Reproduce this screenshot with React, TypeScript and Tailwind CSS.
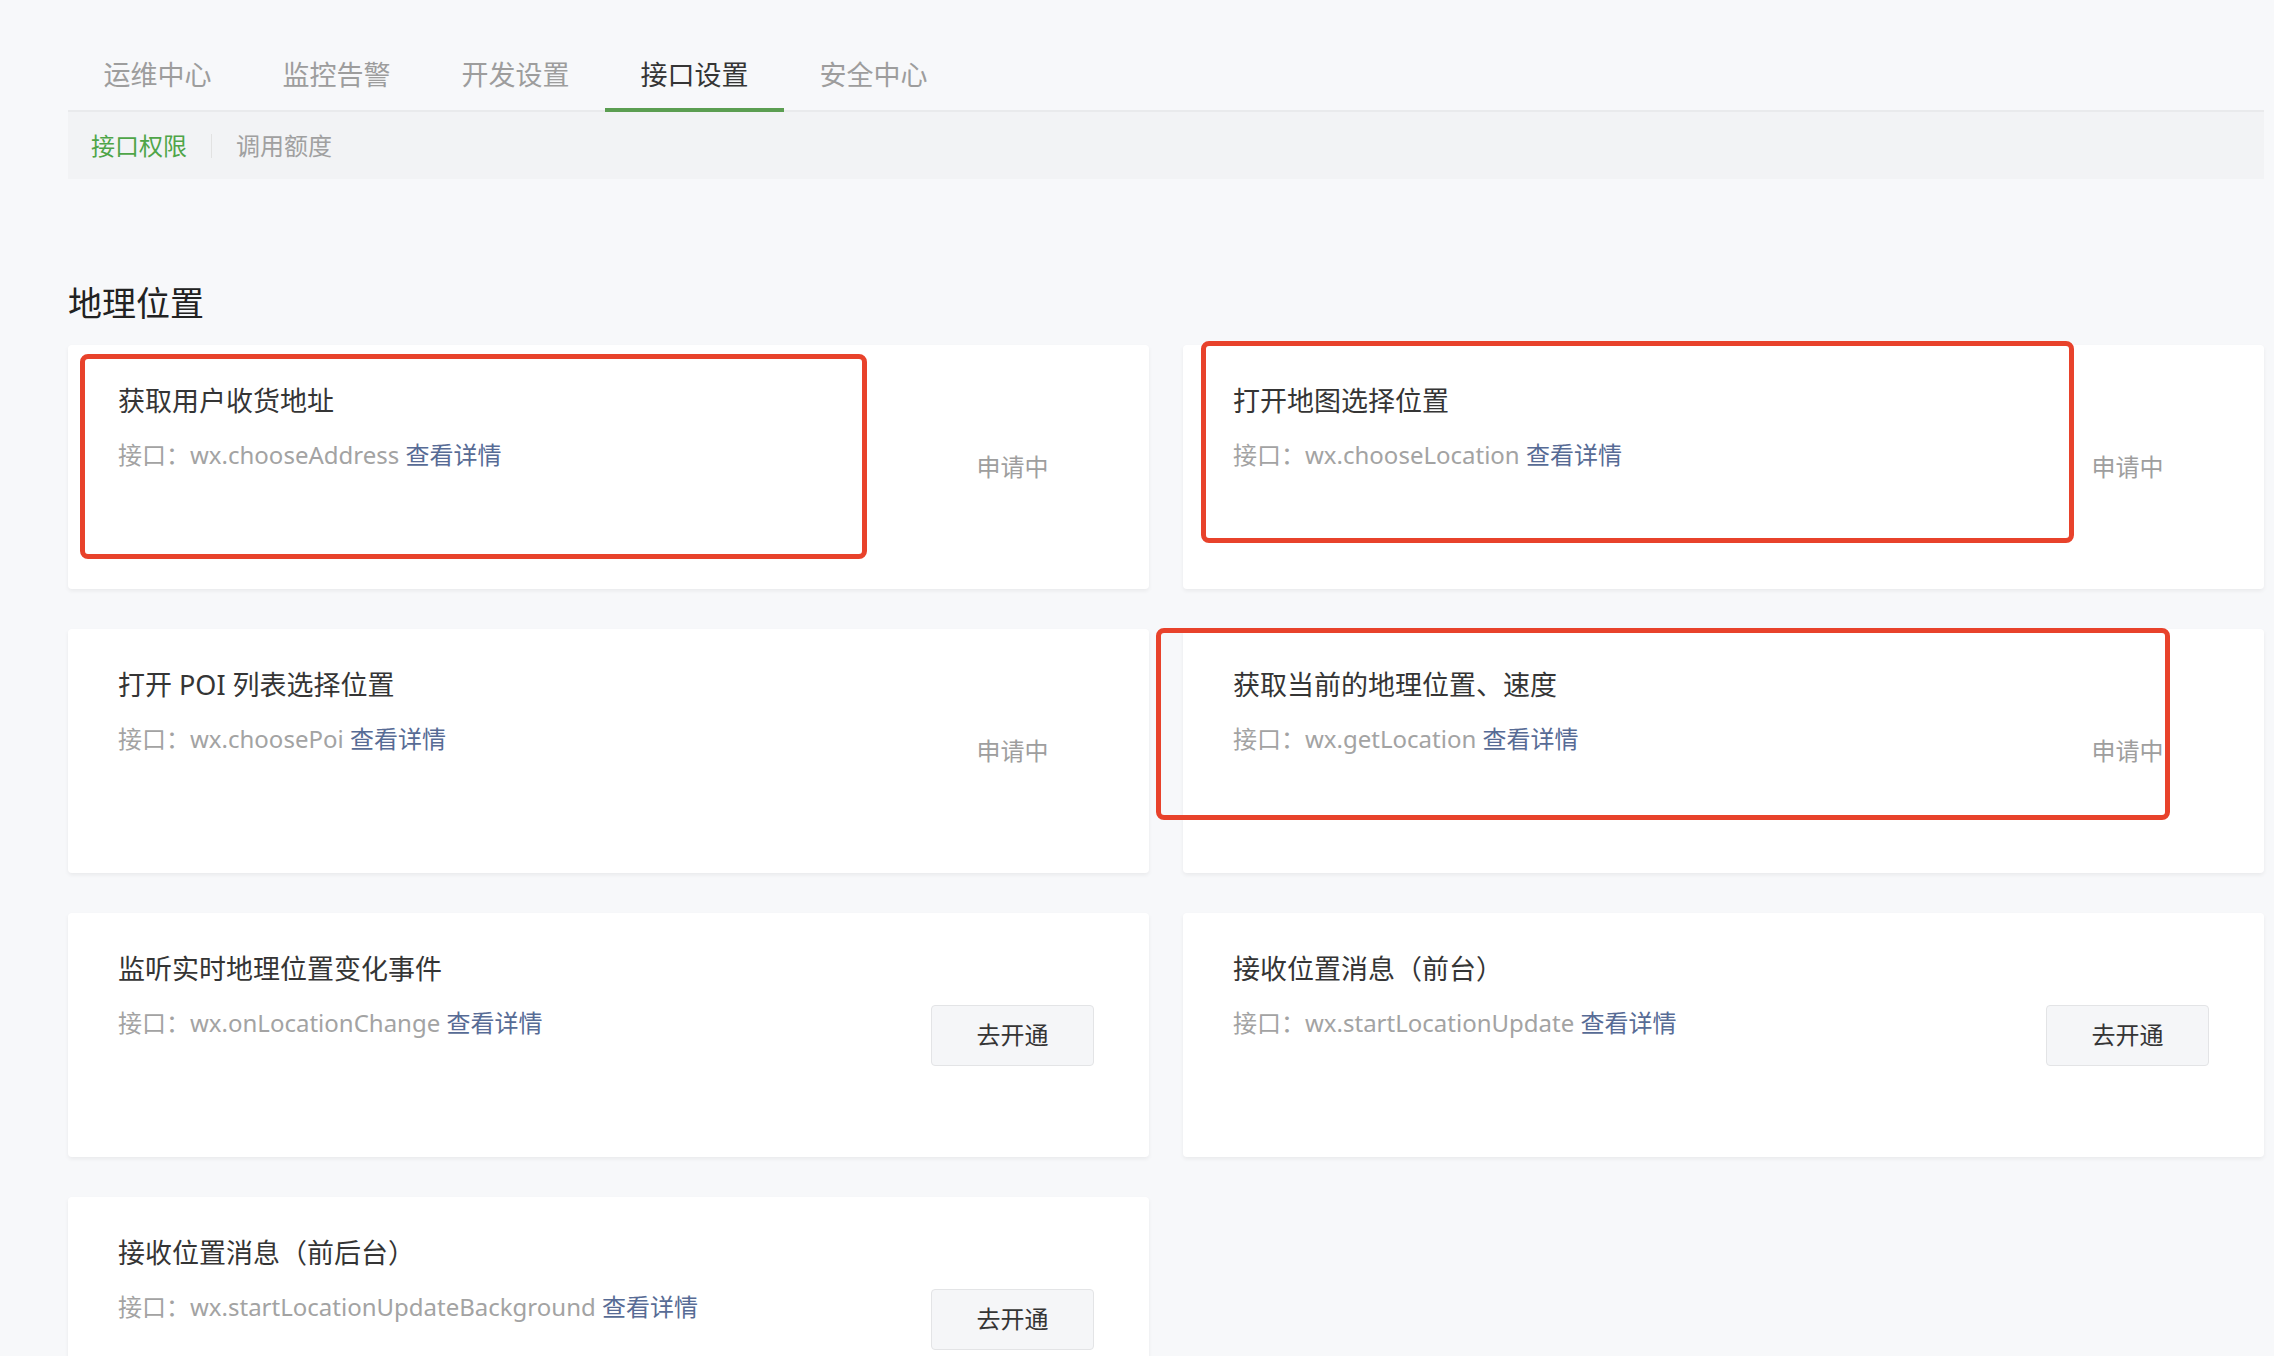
import React from 'react';

type Api = {
  title: string;
  api: string;
  status: 'pending' | 'open';
};

const TABS = ['运维中心', '监控告警', '开发设置', '接口设置', '安全中心'];
const ACTIVE_TAB = '接口设置';

const APIS: Api[] = [
  { title: '获取用户收货地址', api: 'wx.chooseAddress', status: 'pending' },
  { title: '打开地图选择位置', api: 'wx.chooseLocation', status: 'pending' },
  { title: '打开 POI 列表选择位置', api: 'wx.choosePoi', status: 'pending' },
  { title: '获取当前的地理位置、速度', api: 'wx.getLocation', status: 'pending' },
  { title: '监听实时地理位置变化事件', api: 'wx.onLocationChange', status: 'open' },
  { title: '接收位置消息（前台）', api: 'wx.startLocationUpdate', status: 'open' },
  { title: '接收位置消息（前后台）', api: 'wx.startLocationUpdateBackground', status: 'open' },
];

// 截图上的红色标注框
const MARKS = [
  { left: 80, top: 354, width: 787, height: 205 },
  { left: 1201, top: 341, width: 873, height: 202 },
  { left: 1156, top: 628, width: 1014, height: 192 },
];

const ApiCard: React.FC<{ item: Api }> = ({ item }) => (
  <div className="h-[244px] bg-white rounded-[4px] shadow-[0_2px_4px_rgba(0,0,0,0.06)] flex">
    <div className="flex-1 pl-[50px] pt-[37px]">
      <div className="text-[27px] leading-[38px] text-[#353535]">{item.title}</div>
      <div className="mt-[18px] text-[24px] leading-[34px] text-[#a3a3a3]">
        接口：{item.api} <a className="text-[#576b95] cursor-pointer">查看详情</a>
      </div>
    </div>
    <div className="w-[163px] mr-[55px] flex items-center justify-center">
      {item.status === 'pending' ? (
        <span className="text-[24px] text-[#9e9e9e]">申请中</span>
      ) : (
        <button className="w-full h-[61px] rounded-[4px] bg-[#f5f6f8] border border-[#e3e4e6] text-[24px] text-[#353535]">
          去开通
        </button>
      )}
    </div>
  </div>
);

export default function App() {
  return (
    <div
      className="relative min-h-screen bg-[#f7f8fa] pl-[68px] pr-[10px] pb-[60px]"
      style={{ fontFamily: '"Noto Sans", "Noto Sans CJK SC", sans-serif' }}
    >
      {/* 主导航 */}
      <div className="flex pt-[40px] border-b-2 border-[#e9eaec]">
        {TABS.map(tab => (
          <div
            key={tab}
            className={`relative h-[70px] w-[179px] flex items-center justify-center text-[27px] ${
              tab === ACTIVE_TAB ? 'text-[#353535]' : 'text-[#9d9d9d]'
            }`}
          >
            {tab}
            {tab === ACTIVE_TAB && (
              <span className="absolute left-0 right-0 bottom-[-2px] h-[4px] bg-[#5b9e51]" />
            )}
          </div>
        ))}
      </div>

      {/* 子导航 */}
      <div className="h-[67px] bg-[#f2f3f5] flex items-center pl-[23px] text-[24px]">
        <span className="text-[#4fa548]">接口权限</span>
        <span className="mx-[24px] w-px h-[24px] bg-[#e2e2e2]" />
        <span className="text-[#a0a0a0]">调用额度</span>
      </div>

      <h2 className="mt-[101px] mb-[19px] text-[34px] leading-[46px] font-normal text-[#222]">地理位置</h2>

      <div className="grid grid-cols-2 gap-x-[34px] gap-y-[40px]">
        {APIS.map(item => (
          <ApiCard key={item.api} item={item} />
        ))}
      </div>

      {MARKS.map((m, i) => (
        <div
          key={i}
          className="absolute border-[5px] border-[#e8422b] rounded-[8px] pointer-events-none"
          style={{ left: m.left, top: m.top, width: m.width, height: m.height }}
        />
      ))}
    </div>
  );
}
